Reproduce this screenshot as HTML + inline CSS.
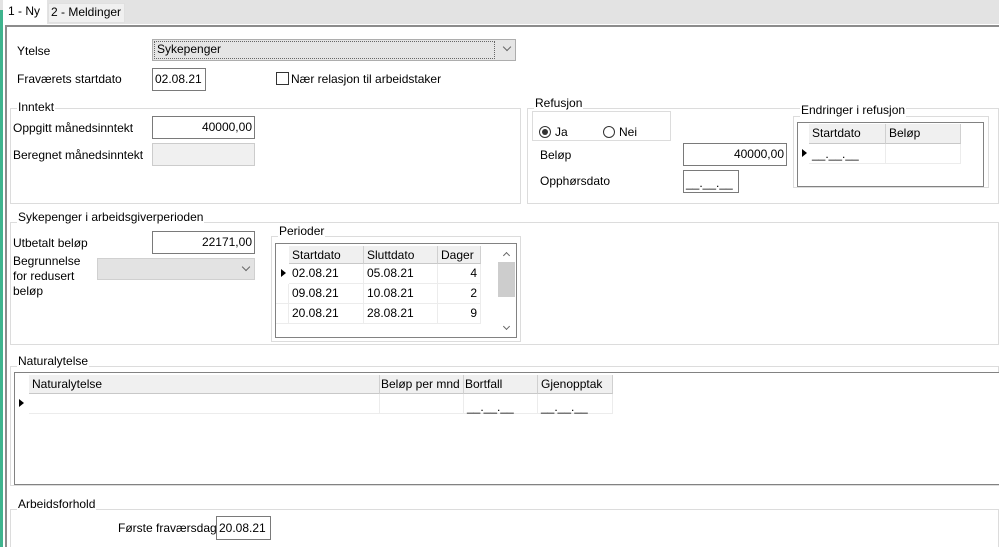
<!DOCTYPE html>
<html style="overflow:hidden;width:999px;height:547px"><head><meta charset="utf-8"><style>
*{box-sizing:border-box;margin:0;padding:0}
body{width:999px;height:547px;overflow:hidden;background:#fff;font-family:"Liberation Sans",Arial,sans-serif;font-size:12px;color:#000;position:relative}
.a{position:absolute;white-space:nowrap}
.gb{position:absolute;border:1px solid #dcdcdc}
.gt{position:absolute;background:#fff;padding:0 1px;line-height:14px;color:#000}
.in{position:absolute;border:1px solid #7a7a7a;background:#fff;line-height:20px;padding:0 2px}
.r{text-align:right}
.grid{position:absolute;border:1px solid #828282;background:#fff}
.h{position:absolute;background:#f0f0f0;border-right:1px solid #d0d0d0;border-bottom:1px solid #c8c8c8;line-height:18px;padding-left:3px}
.c{position:absolute;border-right:1px solid #ececec;border-bottom:1px solid #ececec;line-height:19px;padding:0 3px}
.tri{position:absolute;width:0;height:0;border-top:4px solid transparent;border-bottom:4px solid transparent;border-left:5px solid #000}
.chev{position:absolute;width:6px;height:6px;border-right:1px solid #666;border-bottom:1px solid #666;transform:rotate(45deg)}
</style></head><body>
<div class="a" style="left:0;top:0;width:999px;height:24px;background:#e3e3e3"></div>
<div class="a" style="left:0;top:10px;width:3px;height:537px;background:#3fb48e"></div>
<div class="a" style="left:3px;top:0;width:44px;height:24px;background:#fff"></div>
<div class="a" style="left:8px;top:4px">1 - Ny</div>
<div class="a" style="left:48px;top:3px;width:77px;height:20px;background:#f0f0f0;border:1px solid #e0e0e0"></div>
<div class="a" style="left:51px;top:5px">2 - Meldinger</div>
<div class="a" style="left:5px;top:25px;width:994px;height:2px;background:#8c8c8c"></div>
<div class="a" style="left:5px;top:25px;width:2px;height:522px;background:#8c8c8c"></div>

<div class="a" style="left:17px;top:44px">Ytelse</div>
<div class="a" style="left:152px;top:39px;width:364px;height:22px;background:#e5e5e5;border:1px solid #adadad"></div>
<div class="a" style="left:154px;top:41px;width:341px;height:18px;border:1px dotted #666"></div>
<div class="a" style="left:157px;top:42px">Sykepenger</div>
<div class="chev" style="left:504px;top:44px"></div>

<div class="a" style="left:17px;top:72px">Fraværets startdato</div>
<div class="in" style="left:152px;top:68px;width:54px;height:23px">02.08.21</div>
<div class="a" style="left:276px;top:72px;width:13px;height:13px;border:1px solid #333;background:#fff"></div>
<div class="a" style="left:291px;top:72px">Nær relasjon til arbeidstaker</div>

<div class="gb" style="left:10px;top:108px;width:511px;height:96px"></div>
<div class="gt" style="left:17px;top:100px">Inntekt</div>
<div class="a" style="left:13px;top:121px">Oppgitt månedsinntekt</div>
<div class="in r" style="left:152px;top:116px;width:103px;height:23px">40000,00</div>
<div class="a" style="left:13px;top:148px">Beregnet månedsinntekt</div>
<div class="a" style="left:152px;top:143px;width:103px;height:23px;background:#f0f0f0;border:1px solid #ccc"></div>

<div class="gb" style="left:527px;top:108px;width:472px;height:96px"></div>
<div class="gt" style="left:534px;top:96px">Refusjon</div>
<div class="gb" style="left:532px;top:111px;width:139px;height:30px"></div>
<div class="a" style="left:539px;top:126px;width:12px;height:12px;border:1px solid #333;border-radius:50%"></div>
<div class="a" style="left:542px;top:129px;width:6px;height:6px;background:#333;border-radius:50%"></div>
<div class="a" style="left:555px;top:125px">Ja</div>
<div class="a" style="left:603px;top:126px;width:12px;height:12px;border:1px solid #333;border-radius:50%"></div>
<div class="a" style="left:619px;top:125px">Nei</div>
<div class="a" style="left:540px;top:148px">Beløp</div>
<div class="in r" style="left:683px;top:143px;width:104px;height:23px">40000,00</div>
<div class="a" style="left:540px;top:174px">Opphørsdato</div>
<div class="in" style="left:683px;top:170px;width:56px;height:23px;line-height:24px">__.__.__</div>

<div class="gb" style="left:793px;top:116px;width:196px;height:72px"></div>
<div class="gt" style="left:800px;top:103px">Endringer i refusjon</div>
<div class="grid" style="left:797px;top:122px;width:187px;height:65px">
 <div class="h" style="left:11px;top:1px;width:77px;height:20px">Startdato</div>
 <div class="h" style="left:88px;top:1px;width:75px;height:20px">Beløp</div>
 <div class="tri" style="left:4px;top:26px"></div>
 <div class="c" style="left:11px;top:21px;width:77px;height:20px;line-height:21px">__.__.__</div>
 <div class="c" style="left:88px;top:21px;width:75px;height:20px"></div>
</div>

<div class="gb" style="left:10px;top:222px;width:989px;height:123px"></div>
<div class="gt" style="left:17px;top:210px">Sykepenger i arbeidsgiverperioden</div>
<div class="a" style="left:13px;top:236px">Utbetalt beløp</div>
<div class="in r" style="left:152px;top:231px;width:103px;height:23px">22171,00</div>
<div class="a" style="left:13px;top:254px;line-height:15px">Begrunnelse<br>for redusert<br>beløp</div>
<div class="a" style="left:97px;top:258px;width:158px;height:22px;background:#e3e3e3;border:1px solid #d0d0d0"></div>
<div class="chev" style="left:243px;top:264px"></div>

<div class="gb" style="left:271px;top:236px;width:250px;height:106px"></div>
<div class="gt" style="left:278px;top:224px">Perioder</div>
<div class="grid" style="left:275px;top:243px;width:242px;height:95px">
 <div class="h" style="left:13px;top:2px;width:75px;height:18px">Startdato</div>
 <div class="h" style="left:88px;top:2px;width:74px;height:18px">Sluttdato</div>
 <div class="h" style="left:162px;top:2px;width:43px;height:18px">Dager</div>
 <div class="tri" style="left:5px;top:25px"></div>
 <div class="c" style="left:13px;top:20px;width:75px;height:20px">02.08.21</div>
 <div class="c" style="left:88px;top:20px;width:74px;height:20px">05.08.21</div>
 <div class="c r" style="left:162px;top:20px;width:43px;height:20px">4</div>
 <div class="c" style="left:13px;top:40px;width:75px;height:20px">09.08.21</div>
 <div class="c" style="left:88px;top:40px;width:74px;height:20px">10.08.21</div>
 <div class="c r" style="left:162px;top:40px;width:43px;height:20px">2</div>
 <div class="c" style="left:13px;top:60px;width:75px;height:20px">20.08.21</div>
 <div class="c" style="left:88px;top:60px;width:74px;height:20px">28.08.21</div>
 <div class="c r" style="left:162px;top:60px;width:43px;height:20px">9</div>
 <div class="c" style="left:0;top:40px;width:13px;height:20px"></div>
 <div class="c" style="left:0;top:60px;width:13px;height:20px"></div>
 <div class="a" style="left:222px;top:18px;width:17px;height:35px;background:#cdcdcd"></div>
 <div class="chev" style="left:228px;top:9px;transform:rotate(225deg);width:5px;height:5px"></div>
 <div class="chev" style="left:228px;top:80px;width:5px;height:5px"></div>
</div>

<div class="gb" style="left:10px;top:366px;width:989px;height:120px"></div>
<div class="gt" style="left:17px;top:354px">Naturalytelse</div>
<div class="grid" style="left:14px;top:372px;width:986px;height:113px;border-right:none">
 <div class="h" style="left:14px;top:2px;width:351px;height:19px">Naturalytelse</div>
 <div class="h" style="left:365px;top:2px;width:84px;height:19px;padding-left:1px">Beløp per mnd</div>
 <div class="h" style="left:449px;top:2px;width:74px;height:19px;padding-left:1px">Bortfall</div>
 <div class="h" style="left:523px;top:2px;width:75px;height:19px">Gjenopptak</div>
 <div class="tri" style="left:4px;top:26px"></div>
 <div class="c" style="left:14px;top:21px;width:351px;height:20px"></div>
 <div class="c" style="left:365px;top:21px;width:84px;height:20px"></div>
 <div class="c" style="left:449px;top:21px;width:74px;height:20px;line-height:26px">__.__.__</div>
 <div class="c" style="left:523px;top:21px;width:75px;height:20px;line-height:26px">__.__.__</div>
</div>

<div class="gb" style="left:10px;top:509px;width:989px;height:38px;border-bottom:none"></div>
<div class="gt" style="left:17px;top:497px">Arbeidsforhold</div>
<div class="a" style="left:118px;top:521px">Første fraværsdag</div>
<div class="in" style="left:216px;top:516px;width:55px;height:24px;line-height:22px">20.08.21</div>
</body></html>
